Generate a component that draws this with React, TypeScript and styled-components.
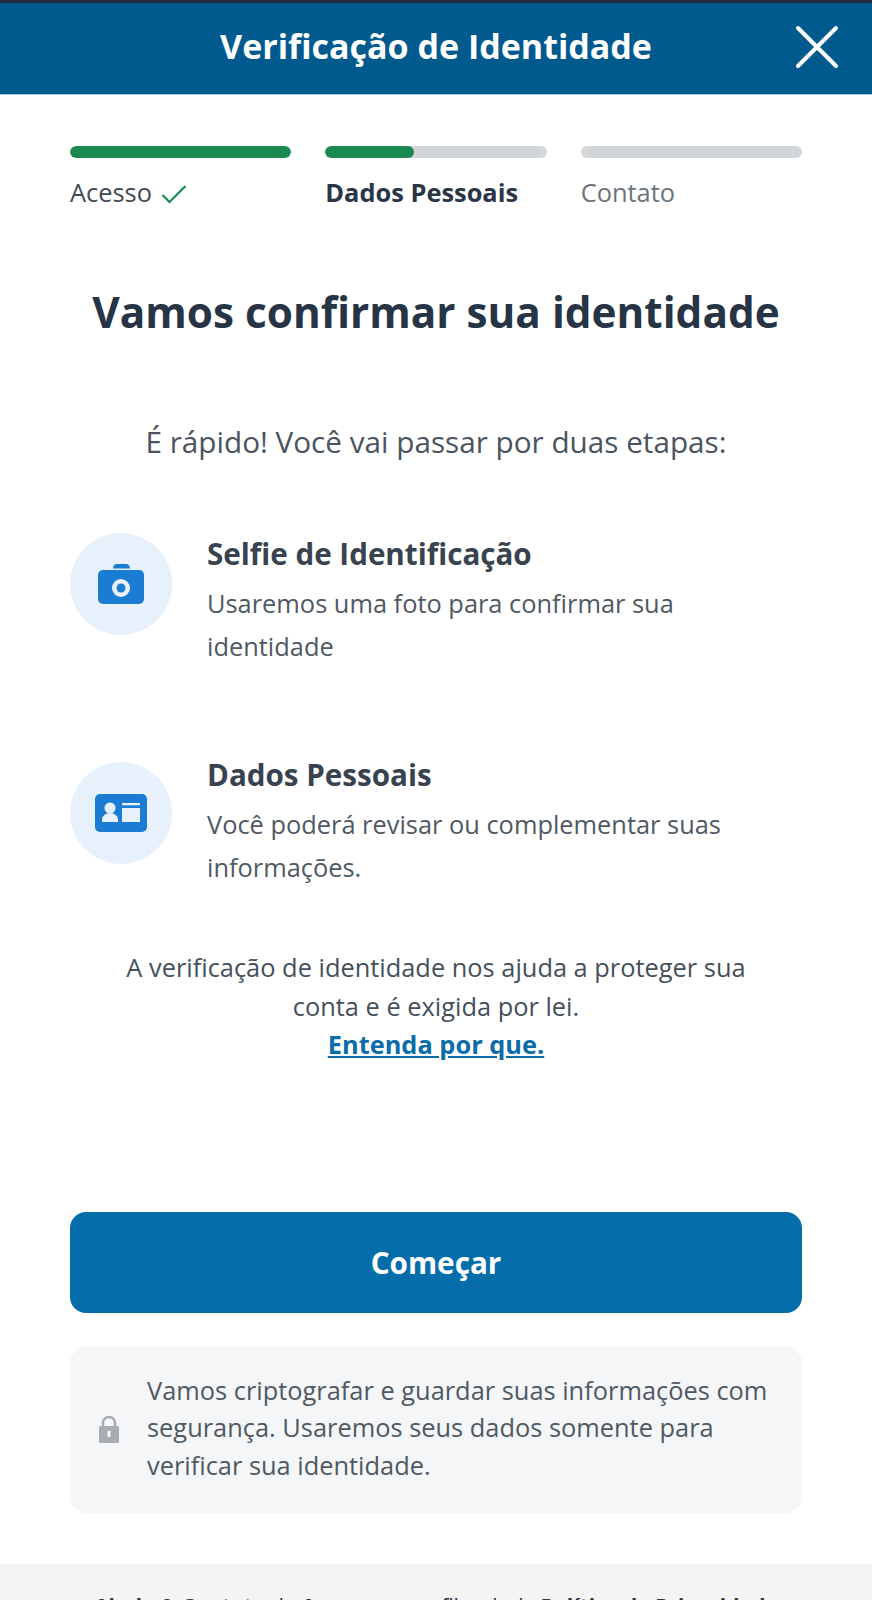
import React from "react";
import styled, { createGlobalStyle } from "styled-components";

const GlobalStyle = createGlobalStyle`
  html, body {
    margin: 0;
    padding: 0;
    background: #fff;
  }
  body {
    font-family: "Open Sans", "Noto Sans", sans-serif;
  }
`;

const Page = styled.div`
  width: 872px;
  height: 1600px;
  overflow: hidden;
  display: flex;
  flex-direction: column;
  background: #fff;
  border-top: 3px solid #1f2a38;
  box-sizing: border-box;
`;

const Header = styled.header`
  height: 91px;
  flex-shrink: 0;
  background: #005a8e;
  box-shadow: 0 1px 0 #a9cbe3;
  color: #fff;
  display: flex;
  align-items: center;
  justify-content: center;
  position: relative;
`;

const HeaderTitle = styled.h1`
  margin: 0 0 6px;
  font-size: 34px;
  font-weight: 700;
`;

const CloseButton = styled.button`
  position: absolute;
  right: 32px;
  top: 21px;
  width: 46px;
  height: 46px;
  padding: 0;
  border: 0;
  background: none;
  display: flex;
`;

const Content = styled.main`
  padding: 52px 70px 0;
  display: flex;
  flex-direction: column;
`;

const Steps = styled.div`
  display: grid;
  grid-template-columns: repeat(3, 1fr);
  column-gap: 34px;
`;

const Step = styled.div`
  display: flex;
  flex-direction: column;
`;

const Track = styled.div`
  height: 12px;
  border-radius: 6px;
  background: #d2d6d9;
  overflow: hidden;
`;

const Fill = styled.div`
  height: 100%;
  border-radius: 6px;
  background: #1a8b50;
`;

const StepLabel = styled.div<{ $state: "done" | "active" | "next" }>`
  margin-top: 17px;
  height: 34px;
  display: flex;
  align-items: center;
  gap: 9px;
  font-size: 25.4px;
  font-weight: ${({ $state }) => ($state === "active" ? 700 : 400)};
  color: ${({ $state }) =>
    $state === "active" ? "#2a3647" : $state === "done" ? "#3f4a56" : "#6b747c"};
`;

const CheckMark = styled.svg`
  margin-top: 4px;
`;

const Title = styled.h2`
  margin: 74px 0 0;
  text-align: center;
  font-size: 42.3px;
  line-height: 58px;
  font-weight: 700;
  color: #263445;
`;

const Intro = styled.p`
  margin: 81px 0 0;
  text-align: center;
  font-size: 29.7px;
  line-height: 40px;
  color: #4a5460;
`;

const Feature = styled.section<{ $top: number }>`
  margin-top: ${({ $top }) => $top}px;
  display: flex;
  gap: 35px;
`;

const IconCircle = styled.div`
  width: 102px;
  height: 102px;
  flex-shrink: 0;
  border-radius: 50%;
  background: #e6f1fb;
  display: flex;
  align-items: center;
  justify-content: center;
`;

const FeatureText = styled.div<{ $shift: number }>`
  margin-top: ${({ $shift }) => $shift}px;
  display: flex;
  flex-direction: column;
`;

const FeatureTitle = styled.h3`
  margin: 0;
  font-size: 29.6px;
  line-height: 44px;
  font-weight: 700;
  color: #38434f;
`;

const FeatureBody = styled.p`
  margin: 6px 0 0;
  font-size: 25.4px;
  line-height: 42.5px;
  color: #4f5963;
`;

const Note = styled.p`
  margin: 60px 0 0;
  padding: 0 40px;
  text-align: center;
  font-size: 25.4px;
  line-height: 38.5px;
  color: #46505b;
`;

const NoteLink = styled.a`
  display: block;
  font-weight: 700;
  color: #0a6ca8;
  text-decoration: underline;
`;

const StartButton = styled.button`
  margin-top: 148px;
  height: 101px;
  border: 0;
  border-radius: 16px;
  background: #056daa;
  color: #fff;
  font-family: inherit;
  font-size: 29.7px;
  font-weight: 700;
`;

const SecurityBox = styled.div`
  margin-top: 34px;
  height: 166px;
  padding: 0 16px 0 29px;
  box-sizing: border-box;
  border-radius: 16px;
  background: #f4f6f8;
  display: flex;
  align-items: center;
  gap: 28px;
`;

const LockIcon = styled.svg`
  flex-shrink: 0;
`;

const SecurityText = styled.p`
  margin: -3px 0 0;
  font-size: 25.4px;
  line-height: 37.6px;
  color: #4f5963;
`;

const Footer = styled.footer`
  margin-top: 51px;
  flex: 1;
  background: #f4f4f5;
  padding-top: 27px;
  text-align: center;
  font-size: 21px;
  line-height: 30px;
  color: #2a3440;
`;

const FooterLink = styled.b`
  font-weight: 700;
`;

const CameraIcon = () => (
  <svg width="46" height="40" viewBox="0 0 46 40" fill="#1a7cd3">
    <path d="M15 4.500c0-2.500 1.500-4.500 4-4.500h9c2.500 0 4 2 4 4.500z" />
    <rect y="6" width="46" height="34" rx="5" />
    <circle cx="23" cy="24" r="9" fill="#e6f1fb" />
    <circle cx="23" cy="24" r="4.500" />
  </svg>
);

const IdCardIcon = () => (
  <svg width="52" height="38" viewBox="0 0 52 38" fill="#1a7cd3">
    <rect width="52" height="38" rx="5" />
    <circle cx="15" cy="14" r="5.500" fill="#e6f1fb" />
    <path d="M7 28v-2.500c0-3.500 3.500-6.500 8-6.500s8 3 8 6.500V28z" fill="#e6f1fb" />
    <rect x="27" y="9" width="18" height="2.300" fill="#e6f1fb" />
    <rect x="27" y="14" width="18" height="14" fill="#e6f1fb" />
  </svg>
);

const App: React.FunctionComponent = () => (
  <Page>
    <GlobalStyle />
    <Header>
      <HeaderTitle>Verificação de Identidade</HeaderTitle>
      <CloseButton aria-label="Fechar">
        <svg width="46" height="46" viewBox="0 0 46 46" stroke="#fff" strokeWidth="4" strokeLinecap="round">
          <path d="M4 4l38 38M42 4L4 42" />
        </svg>
      </CloseButton>
    </Header>
    <Content>
      <Steps>
        <Step>
          <Track>
            <Fill style={{ width: "100%" }} />
          </Track>
          <StepLabel $state="done">
            Acesso
            <CheckMark width="26" height="20" viewBox="0 0 26 20" fill="none" stroke="#1a8b50" strokeWidth="2.200">
              <path d="M1.500 11l7 7L24.500 2" />
            </CheckMark>
          </StepLabel>
        </Step>
        <Step>
          <Track>
            <Fill style={{ width: "40%" }} />
          </Track>
          <StepLabel $state="active">Dados Pessoais</StepLabel>
        </Step>
        <Step>
          <Track />
          <StepLabel $state="next">Contato</StepLabel>
        </Step>
      </Steps>
      <Title>Vamos confirmar sua identidade</Title>
      <Intro>É rápido! Você vai passar por duas etapas:</Intro>
      <Feature $top={71}>
        <IconCircle>
          <CameraIcon />
        </IconCircle>
        <FeatureText $shift={-1}>
          <FeatureTitle>Selfie de Identificação</FeatureTitle>
          <FeatureBody>Usaremos uma foto para confirmar sua identidade</FeatureBody>
        </FeatureText>
      </Feature>
      <Feature $top={95}>
        <IconCircle>
          <IdCardIcon />
        </IconCircle>
        <FeatureText $shift={-9}>
          <FeatureTitle>Dados Pessoais</FeatureTitle>
          <FeatureBody>Você poderá revisar ou complementar suas informações.</FeatureBody>
        </FeatureText>
      </Feature>
      <Note>
        A verificação de identidade nos ajuda a proteger sua conta e é exigida por lei.
        <NoteLink>Entenda por que.</NoteLink>
      </Note>
      <StartButton>Começar</StartButton>
      <SecurityBox>
        <LockIcon width="20" height="27" viewBox="0 0 20 27">
          <path d="M4 11V6.500a6 5.500 0 0 1 12 0V11" fill="none" stroke="#a9adb2" strokeWidth="2.500" />
          <rect y="10" width="20" height="17" rx="1.500" fill="#a9adb2" />
          <rect x="8.500" y="15" width="3" height="6" fill="#f4f6f8" />
        </LockIcon>
        <SecurityText>
          Vamos criptografar e guardar suas informações com segurança. Usaremos seus dados somente para verificar sua identidade.
        </SecurityText>
      </SecurityBox>
    </Content>
    <Footer>
      <FooterLink>Ajuda &amp; Contato</FooterLink> de <FooterLink>Acesso</FooterLink> ao perfil web da <FooterLink>Política de Privacidade</FooterLink>
    </Footer>
  </Page>
);

export default App;
